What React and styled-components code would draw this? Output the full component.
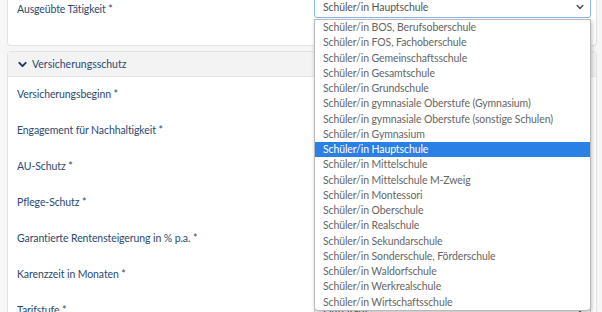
import React from 'react'
import styled, { createGlobalStyle } from 'styled-components'

const Global = createGlobalStyle`
  html, body { margin: 0; padding: 0; }
  body {
    background: #f6f6f6;
    font-family: Lato, "Open Sans", sans-serif;
    overflow: hidden;
  }
`

const Page = styled.div`
  width: 602px;
  height: 312px;
  overflow: hidden;
  display: flex;
  flex-direction: column;
  gap: 5px;
  padding: 0 5px 0 7px;
  box-sizing: border-box;
`

const Card = styled.div`
  background: #fff;
  border: 1px solid #e2e2e2;
  border-top: ${p => (p.cut ? 'none' : '1px solid #e2e2e2')};
  border-radius: ${p => (p.cut ? '0 0 4px 4px' : '4px')};
  flex-shrink: 0;
`

const CardHead = styled.div`
  height: 24px;
  background: #f3f3f3;
  border-bottom: 1px solid #e6e6e6;
  display: flex;
  align-items: center;
  gap: 5px;
  padding-left: 10px;
  font-size: 10.5px;
  color: #2b4a72;
`

const CardBody = styled.div`
  padding: 0 5px 0 9px;
  padding-top: ${p => p.top || 0}px;
  padding-bottom: ${p => p.bottom || 0}px;
  display: flex;
  flex-direction: column;
  gap: ${p => p.gap || 0}px;
`

const Row = styled.div`
  display: grid;
  grid-template-columns: 297px 1fr;
  align-items: center;
  height: 22px;
  position: relative;
`

const Label = styled.div`
  font-size: 10.5px;
  letter-spacing: -0.1px;
  color: #2b4a72;
  white-space: nowrap;
`

const Select = styled.div`
  height: 22px;
  box-sizing: border-box;
  border: 1px solid ${p => (p.focus ? '#86b7ee' : '#cfd4da')};
  border-radius: 3px;
  background: #fff;
  display: flex;
  align-items: center;
  justify-content: space-between;
  padding: 0 6px 0 8px;
  font-size: 10.5px;
  letter-spacing: -0.1px;
  color: #555;
`

const List = styled.div`
  position: absolute;
  left: 297px;
  right: 0;
  top: 23px;
  background: #fff;
  border: 1px solid #b9b9b9;
  border-radius: 0 0 4px 4px;
  box-shadow: 1px 2px 4px rgba(0, 0, 0, 0.25);
  z-index: 5;
`

const Option = styled.div`
  height: 15.25px;
  line-height: 15.25px;
  padding-left: 8px;
  font-size: 10.5px;
  letter-spacing: -0.1px;
  white-space: nowrap;
  color: ${p => (p.active ? '#fff' : '#666')};
  background: ${p => (p.active ? '#2b80e6' : 'transparent')};
`

const Chevron = ({ size = 9, color = '#444', sw = 2 }) => (
  <svg width={size} height={size} viewBox="0 0 10 10">
    <path d="M1.5 3.2 L5 6.8 L8.5 3.2" fill="none" stroke={color} strokeWidth={sw} strokeLinecap="round" strokeLinejoin="round" />
  </svg>
)

const options = [
  'Schüler/in BOS, Berufsoberschule',
  'Schüler/in FOS, Fachoberschule',
  'Schüler/in Gemeinschaftsschule',
  'Schüler/in Gesamtschule',
  'Schüler/in Grundschule',
  'Schüler/in gymnasiale Oberstufe (Gymnasium)',
  'Schüler/in gymnasiale Oberstufe (sonstige Schulen)',
  'Schüler/in Gymnasium',
  'Schüler/in Hauptschule',
  'Schüler/in Mittelschule',
  'Schüler/in Mittelschule M-Zweig',
  'Schüler/in Montessori',
  'Schüler/in Oberschule',
  'Schüler/in Realschule',
  'Schüler/in Sekundarschule',
  'Schüler/in Sonderschule, Förderschule',
  'Schüler/in Waldorfschule',
  'Schüler/in Werkrealschule',
  'Schüler/in Wirtschaftsschule',
]

// values of the fields hidden under the open list are left empty
const fields = [
  ['Versicherungsbeginn *', ''],
  ['Engagement für Nachhaltigkeit *', ''],
  ['AU-Schutz *', ''],
  ['Pflege-Schutz *', ''],
  ['Garantierte Rentensteigerung in % p.a. *', ''],
  ['Karenzzeit in Monaten *', ''],
  ['Tarifstufe *', 'Einzeltarif'],
]

export default function App() {
  return (
    <>
      <Global />
      <Page>
        <Card cut style={{ marginTop: -4 }}>
          <CardBody bottom={27}>
            <Row>
              <Label style={{ marginTop: 4 }}>Ausgeübte Tätigkeit *</Label>
              <Select focus>
                <span>Schüler/in Hauptschule</span>
                <Chevron size={8} color="#555" />
              </Select>
              <List>
                {options.map(o => (
                  <Option key={o} active={o === 'Schüler/in Hauptschule'}>{o}</Option>
                ))}
              </List>
            </Row>
          </CardBody>
        </Card>
        <Card>
          <CardHead>
            <Chevron size={9} color="#1f3e66" sw={2.2} />
            <span>Versicherungsschutz</span>
          </CardHead>
          <CardBody top={6} gap={14}>
            {fields.map(([l, v]) => (
              <Row key={l}>
                <Label>{l}</Label>
                <Select>
                  <span>{v}</span>
                  <Chevron size={8} color="#555" />
                </Select>
              </Row>
            ))}
          </CardBody>
        </Card>
      </Page>
    </>
  )
}
